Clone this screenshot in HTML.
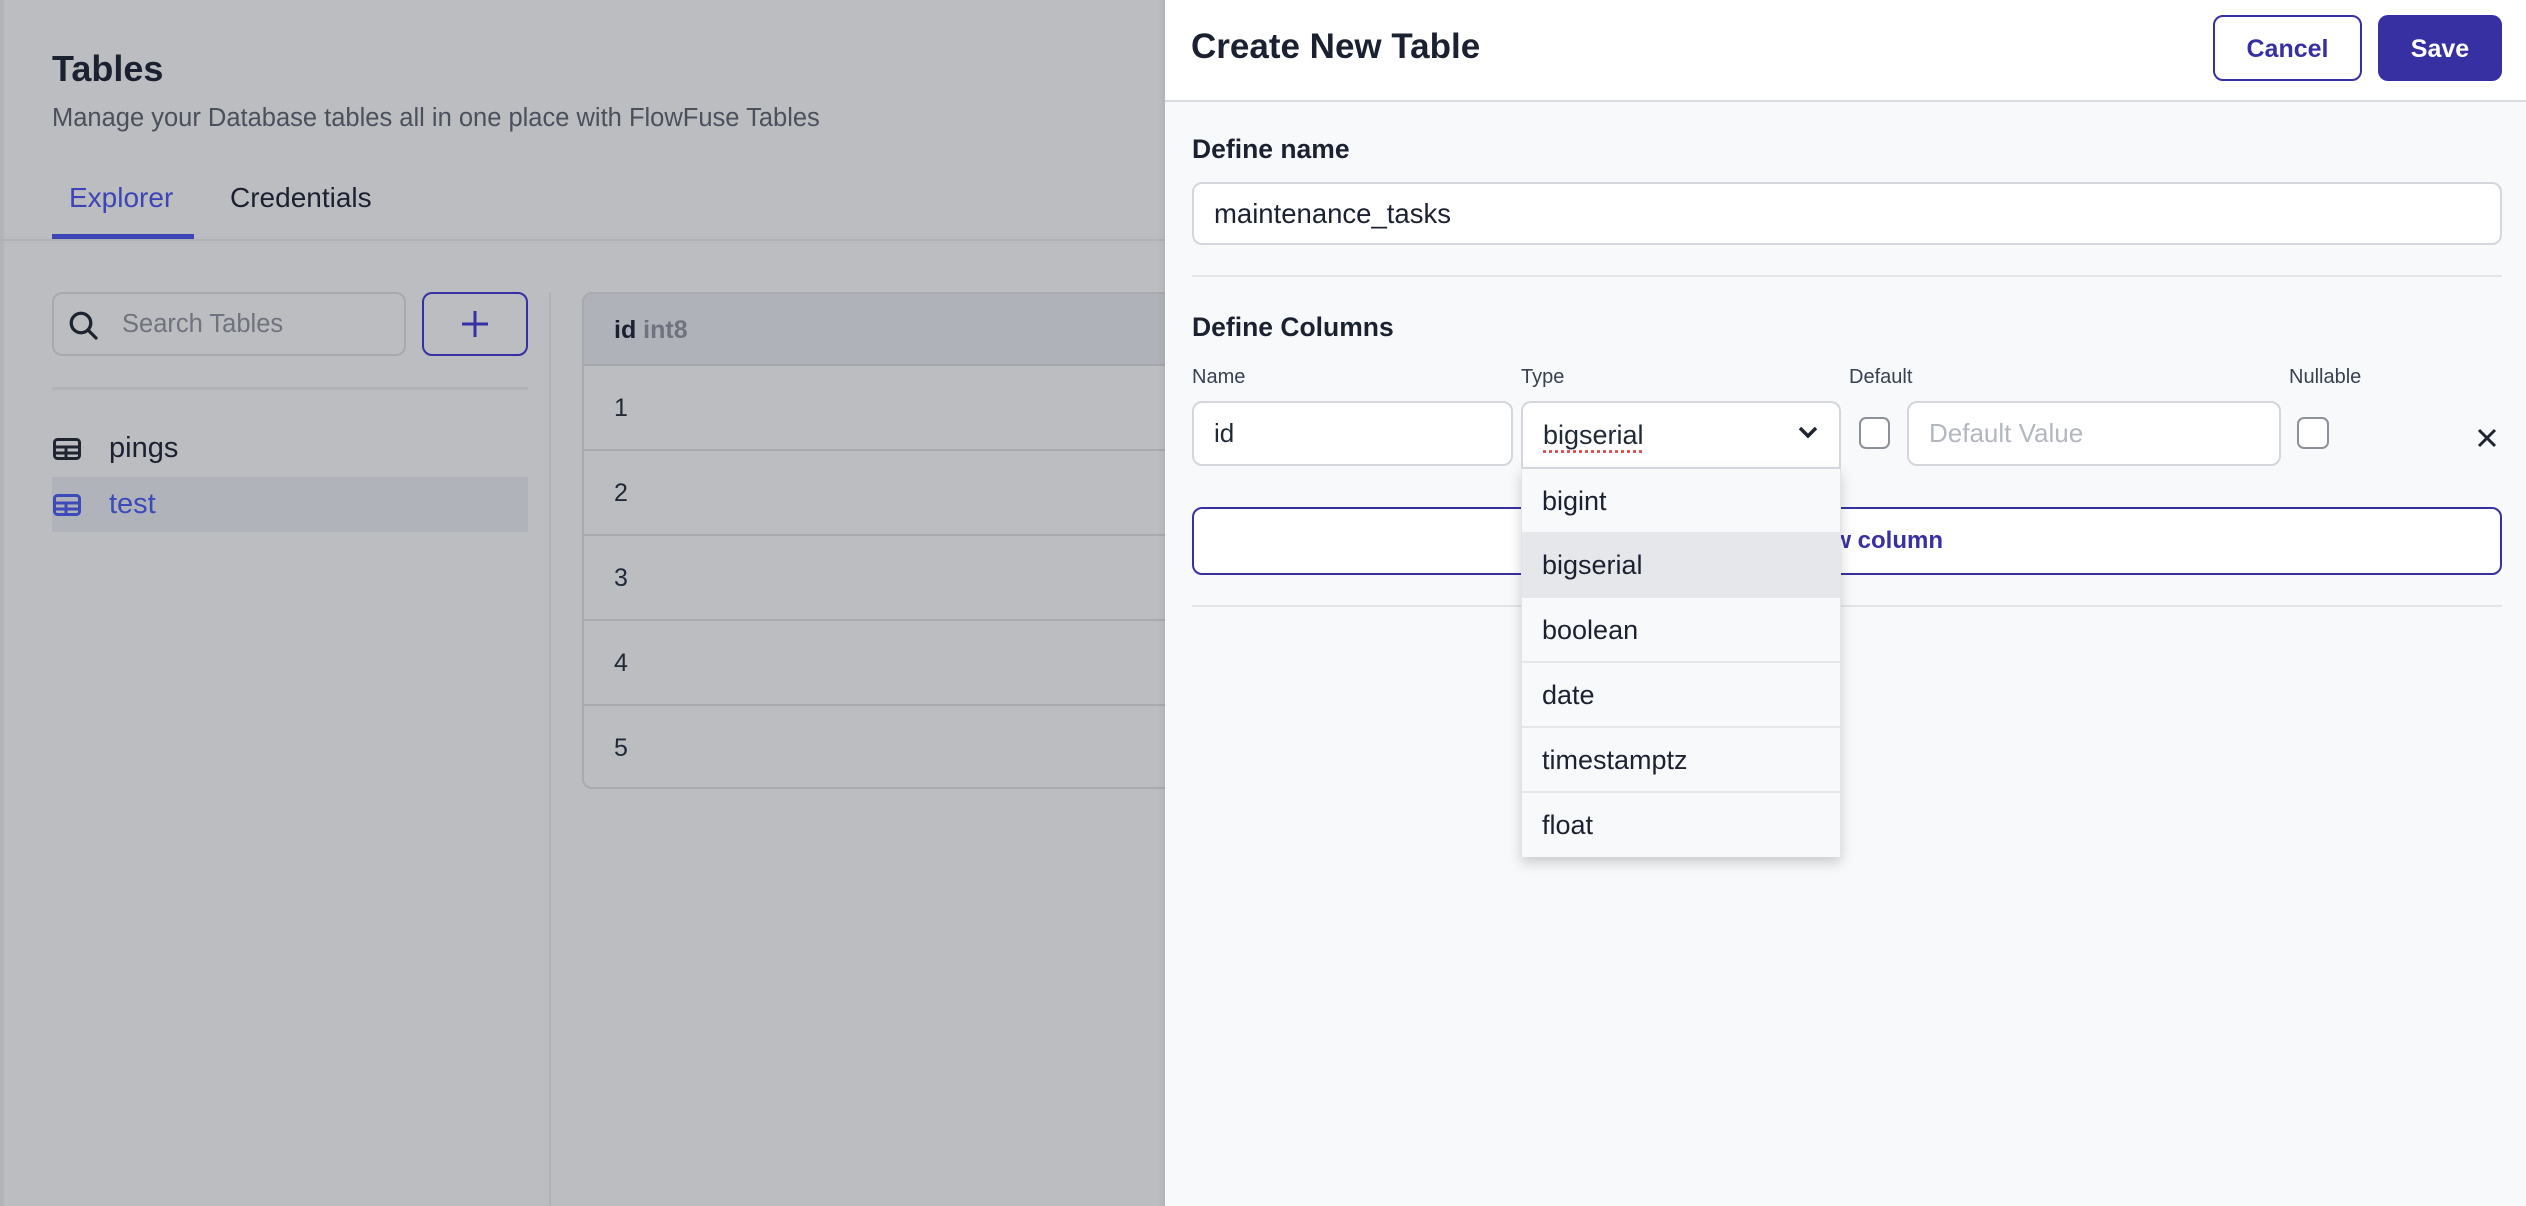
<!DOCTYPE html>
<html><head><meta charset="utf-8"><style>
*{box-sizing:border-box;margin:0;padding:0}
body{width:2526px;height:1206px;overflow:hidden;background:#bcbdc1;font-family:"Liberation Sans",sans-serif;position:relative;color:#1f2937}
.a{position:absolute}
.txt{white-space:nowrap}
</style></head><body>
<!-- left -->
<div class="a" style="left:0;top:0;width:4px;height:1206px;background:#b3b4b9"></div>
<div class="a txt" style="left:52px;top:48px;font-size:36px;font-weight:bold;color:#1b2130">Tables</div>
<div class="a txt" style="left:52px;top:104px;font-size:25.5px;color:#4a505c">Manage your Database tables all in one place with FlowFuse Tables</div>
<div class="a txt" style="left:69px;top:182px;font-size:28px;color:#3d44b5">Explorer</div>
<div class="a txt" style="left:230px;top:182px;font-size:28px;color:#1b2130">Credentials</div>
<div class="a" style="left:0;top:239px;width:1165px;height:2px;background:#aeb0b5"></div>
<div class="a" style="left:52px;top:234px;width:142px;height:5px;background:#3d44b5"></div>
<div class="a" style="left:52px;top:292px;width:354px;height:64px;border:2px solid #a7a9af;border-radius:10px"></div>
<svg class="a" style="left:66px;top:308px" width="36" height="36" viewBox="0 0 24 24" fill="none" stroke="#1f2530" stroke-width="2.2" stroke-linecap="round"><circle cx="10" cy="10" r="6.5"/><path d="M15 15l5 5"/></svg>
<div class="a txt" style="left:122px;top:310px;font-size:25.5px;color:#6f737d">Search Tables</div>
<div class="a" style="left:422px;top:292px;width:106px;height:64px;border:2px solid #3730a3;border-radius:10px"></div>
<svg class="a" style="left:459px;top:308px" width="32" height="32" viewBox="0 0 32 32" stroke="#3730a3" stroke-width="3"><path d="M16 3v26M3 16h26"/></svg>
<div class="a" style="left:52px;top:387px;width:476px;height:3px;background:#b1b3b8"></div>
<div class="a" style="left:52px;top:477px;width:476px;height:55px;background:#b1b3bb"></div>
<svg class="a" style="left:53px;top:438px" width="28" height="22" viewBox="0 0 28 22" fill="none" stroke="#1f2530" stroke-width="3"><rect x="1.5" y="1.5" width="25" height="19" rx="3"/><path d="M1.5 9h25M1.5 15h25M13 9v11"/></svg>
<div class="a txt" style="left:109px;top:432px;font-size:29px;color:#1b2130">pings</div>
<svg class="a" style="left:53px;top:494px" width="28" height="22" viewBox="0 0 28 22" fill="none" stroke="#3d4ab9" stroke-width="3"><rect x="1.5" y="1.5" width="25" height="19" rx="3"/><path d="M1.5 9h25M1.5 15h25M13 9v11"/></svg>
<div class="a txt" style="left:109px;top:488px;font-size:29px;color:#3d4ab9">test</div>
<div class="a" style="left:549px;top:292px;width:2px;height:914px;background:#b0b2b7"></div>
<div class="a" style="left:582px;top:292px;width:700px;height:497px;border:2px solid #a8aab0;border-radius:10px;overflow:hidden">
 <div style="height:72px;background:#b0b2ba;border-bottom:2px solid #a5a7ad;padding:22px 30px;font-size:25px;font-weight:bold;color:#1b2130" class="txt">id <span style="color:#6f737d">int8</span></div>
 <div style="height:85px;border-bottom:2px solid #a8aab0;padding:28px 30px;font-size:25px">1</div>
 <div style="height:85px;border-bottom:2px solid #a8aab0;padding:28px 30px;font-size:25px">2</div>
 <div style="height:85px;border-bottom:2px solid #a8aab0;padding:28px 30px;font-size:25px">3</div>
 <div style="height:85px;border-bottom:2px solid #a8aab0;padding:28px 30px;font-size:25px">4</div>
 <div style="height:85px;padding:28px 30px;font-size:25px">5</div>
</div>
<!-- panel -->
<div class="a" style="left:1158px;top:0;width:8px;height:1206px;background:linear-gradient(to right,rgba(0,0,0,0),rgba(0,0,0,.05))"></div>
<div class="a" style="left:1165px;top:0;width:1361px;height:1206px;background:#f8f9fb"></div>
<div class="a" style="left:1165px;top:0;width:1361px;height:102px;background:#fff;border-bottom:2px solid #d9dbe0"></div>
<div class="a txt" style="left:1191px;top:27px;font-size:35px;font-weight:bold;color:#1b2130">Create New Table</div>
<div class="a" style="left:2213px;top:15px;width:149px;height:66px;border:2px solid #3730a3;border-radius:10px;background:#fff;color:#3730a3;font-size:25px;font-weight:bold;text-align:center;line-height:64px">Cancel</div>
<div class="a" style="left:2378px;top:15px;width:124px;height:66px;border-radius:10px;background:#3730a3;color:#fff;font-size:25px;font-weight:bold;text-align:center;line-height:68px">Save</div>
<div class="a txt" style="left:1192px;top:134px;font-size:26.5px;font-weight:bold;color:#1b2130">Define name</div>
<div class="a" style="left:1192px;top:182px;width:1310px;height:63px;border:2px solid #d4d6db;border-radius:10px;background:#fff;padding:0 20px;line-height:59px;font-size:27.5px;color:#1b2130">maintenance_tasks</div>
<div class="a" style="left:1192px;top:275px;width:1310px;height:2px;background:#e3e5e8"></div>
<div class="a txt" style="left:1192px;top:312px;font-size:26.5px;font-weight:bold;color:#1b2130">Define Columns</div>
<div class="a txt" style="left:1192px;top:366px;font-size:20px;color:#374151">Name</div>
<div class="a txt" style="left:1521px;top:366px;font-size:20px;color:#374151">Type</div>
<div class="a txt" style="left:1849px;top:366px;font-size:20px;color:#374151">Default</div>
<div class="a txt" style="left:2289px;top:366px;font-size:20px;color:#374151">Nullable</div>
<div class="a" style="left:1192px;top:401px;width:321px;height:65px;border:2px solid #d4d6db;border-radius:10px;background:#fff;padding:0 20px;line-height:61px;font-size:26px">id</div>
<div class="a" style="left:1192px;top:507px;width:1310px;height:68px;border:2px solid #3730a3;border-radius:10px;background:#fff;text-align:center;line-height:64px;font-size:24px;font-weight:bold;color:#3730a3">Add new column</div>
<div class="a" style="left:1192px;top:605px;width:1310px;height:2px;background:#e3e5e8"></div>
<div class="a" style="left:1521px;top:401px;width:320px;height:66px;border:2px solid #d4d6db;border-bottom:none;border-radius:10px 10px 0 0;background:#fff;padding:0 20px;line-height:64px;font-size:27px"><span style="text-decoration:underline dotted #e04848;text-underline-offset:6px">bigserial</span></div>
<svg class="a" style="left:1797px;top:424px" width="22" height="18" viewBox="0 0 22 18" fill="none" stroke="#1f2530" stroke-width="3.5"><path d="M3 4l8 8 8-8"/></svg>
<div class="a" style="left:1859px;top:417px;width:31px;height:32px;border:2px solid #8c9099;border-radius:7px;background:#fff"></div>
<div class="a" style="left:1907px;top:401px;width:374px;height:65px;border:2px solid #d4d6db;border-radius:10px;background:#fff;padding:0 20px;line-height:61px;font-size:26px;color:#b3b7bf">Default Value</div>
<div class="a" style="left:2297px;top:417px;width:32px;height:32px;border:2px solid #8c9099;border-radius:7px;background:#fff"></div>
<svg class="a" style="left:2476px;top:427px" width="22" height="22" viewBox="0 0 22 22" stroke="#1f2530" stroke-width="3"><path d="M3 3l16 16M19 3L3 19"/></svg>
<div class="a" style="left:1521px;top:467px;width:320px;height:390px;background:#f8f9fb;box-shadow:0 6px 12px rgba(0,0,0,.18);border-left:1px solid #e2e4e8;border-right:1px solid #e2e4e8;border-top:2px solid #d4d6db;font-size:27px;color:#1b2130">
 <div style="height:64px;padding:0 20px;line-height:64px;border-bottom:1px solid #e5e7ea">bigint</div>
 <div style="height:65px;padding:0 20px;line-height:65px;background:#e6e7ea">bigserial</div>
 <div style="height:65px;padding:0 20px;line-height:65px;border-bottom:2px solid #e5e7ea">boolean</div>
 <div style="height:65px;padding:0 20px;line-height:65px;border-bottom:2px solid #e5e7ea">date</div>
 <div style="height:65px;padding:0 20px;line-height:65px;border-bottom:2px solid #e5e7ea">timestamptz</div>
 <div style="height:64px;padding:0 20px;line-height:64px">float</div>
</div>
</body></html>
